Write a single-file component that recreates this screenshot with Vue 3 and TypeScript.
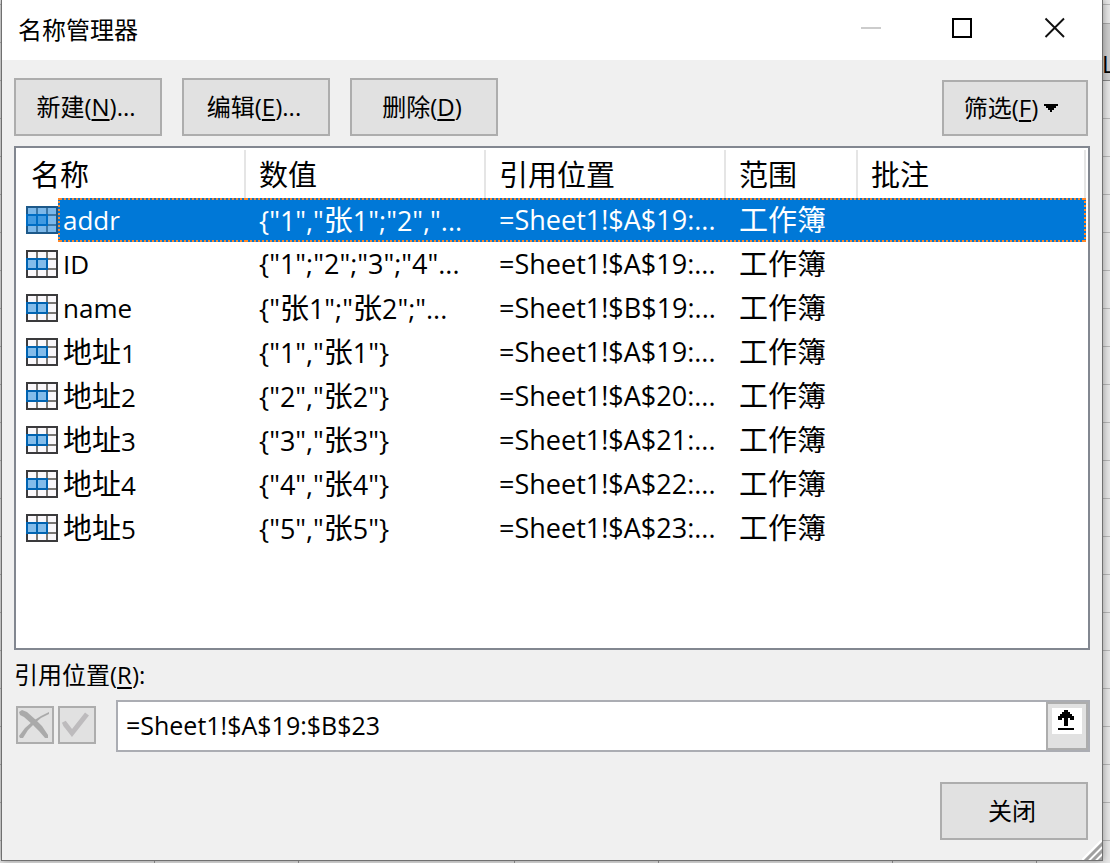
<script setup lang="ts">
import { ref } from 'vue'

interface NameEntry {
  name: string
  value: string
  refersTo: string
  scope: string
}

const entries: NameEntry[] = [
  { name: 'addr', value: '{"1","张1";"2","...', refersTo: '=Sheet1!$A$19:...', scope: '工作簿' },
  { name: 'ID', value: '{"1";"2";"3";"4"...', refersTo: '=Sheet1!$A$19:...', scope: '工作簿' },
  { name: 'name', value: '{"张1";"张2";"...', refersTo: '=Sheet1!$B$19:...', scope: '工作簿' },
  { name: '地址1', value: '{"1","张1"}', refersTo: '=Sheet1!$A$19:...', scope: '工作簿' },
  { name: '地址2', value: '{"2","张2"}', refersTo: '=Sheet1!$A$20:...', scope: '工作簿' },
  { name: '地址3', value: '{"3","张3"}', refersTo: '=Sheet1!$A$21:...', scope: '工作簿' },
  { name: '地址4', value: '{"4","张4"}', refersTo: '=Sheet1!$A$22:...', scope: '工作簿' },
  { name: '地址5', value: '{"5","张5"}', refersTo: '=Sheet1!$A$23:...', scope: '工作簿' },
]

const actions = [
  { text: '新建', key: 'N', tail: ')...' },
  { text: '编辑', key: 'E', tail: ')...' },
  { text: '删除', key: 'D', tail: ')' },
]

const selected = ref(0)
const reference = ref('=Sheet1!$A$19:$B$23')

// Han characters are set larger than Latin text in the list, so runs are split by script.
function runs(text: string): { text: string; han: boolean }[] {
  return (text.match(/[\u4e00-\u9fff]+|[^\u4e00-\u9fff]+/g) ?? []).map((t) => ({
    text: t,
    han: /[\u4e00-\u9fff]/.test(t),
  }))
}

function cells(e: NameEntry): string[] {
  return [e.name, e.value, e.refersTo, e.scope, '']
}
</script>

<template>
  <div class="sheet">
    <div class="column-head"><span>L</span></div>
    <main class="dialog">
      <header class="title-bar">
        <h1>名称管理器</h1>
        <div class="window-buttons">
          <button type="button" aria-label="最小化" disabled>
            <svg width="22" height="22" viewBox="0 0 22 22"><path d="M1 11h20" stroke="#ccc" stroke-width="2" /></svg>
          </button>
          <button type="button" aria-label="最大化">
            <svg width="22" height="22" viewBox="0 0 22 22"><path d="M1 2h18v18H1z" fill="none" stroke="#000" stroke-width="2" /></svg>
          </button>
          <button type="button" aria-label="关闭窗口">
            <svg width="22" height="22" viewBox="0 0 22 22"><path d="M1.500 1.500L20 20M20 1.500L1.500 20" stroke="#111" stroke-width="1.900" /></svg>
          </button>
        </div>
      </header>

      <div class="content">
        <div class="toolbar">
          <button v-for="a in actions" :key="a.key" type="button" class="btn">
            <span>{{ a.text }}(<u>{{ a.key }}</u>{{ a.tail }}</span>
          </button>
          <button type="button" class="btn filter">
            <span>筛选(<u>F</u>)</span>
            <svg width="14" height="8" viewBox="0 0 14 8"><path d="M0 0h14v2h-2v2h-2v2H8v2H6V6H4V4H2V2H0z" /></svg>
          </button>
        </div>

        <div class="list">
          <table>
            <colgroup>
              <col class="c-icon" /><col class="c-name" /><col class="c-wide" /><col class="c-wide" /><col class="c-scope" /><col />
            </colgroup>
            <thead>
              <tr>
                <th colspan="2" class="first">名称</th>
                <th>数值</th>
                <th>引用位置</th>
                <th>范围</th>
                <th>批注</th>
              </tr>
            </thead>
            <tbody>
              <tr v-for="(e, i) in entries" :key="e.name" :class="{ selected: i === selected }" @click="selected = i">
                <td class="icon">
                  <svg width="32" height="28" viewBox="0 0 32 28">
                    <rect x="1" y="1" width="30" height="26" fill="#faf8fb" stroke="#3a3a3c" stroke-width="2" />
                    <path d="M11 2v24M21 2v24M2 9h28M2 19h28" stroke="#797774" stroke-width="2" fill="none" />
                    <rect x="1" y="9" width="20" height="10" fill="#83bcea" stroke="#0063b1" stroke-width="2" />
                    <path d="M11 9v10" stroke="#0063b1" stroke-width="2" />
                    <rect v-if="i === selected" width="32" height="28" fill="#0078d7" fill-opacity=".5" />
                  </svg>
                </td>
                <td v-for="(c, j) in cells(e)" :key="j" :class="{ name: j === 0 }">
                  <span v-for="(r, k) in runs(c)" :key="k" :class="{ han: r.han }">{{ r.text }}</span>
                </td>
              </tr>
            </tbody>
          </table>
        </div>

        <label class="ref-label" for="refers-to">引用位置(<u>R</u>):</label>

        <div class="ref-row">
          <button type="button" class="mini" aria-label="取消" disabled>
            <svg width="34" height="34" viewBox="0 0 34 34" fill="#aaa">
              <path d="M1 4l3-2 5 2 9 8 6 6 6 9v3h-3l-6-7-6-6L6 9 2 7z" />
              <path d="M1 28l6-8 8-7 8-5 8-4v2l-8 4-6 5-7 7-5 8H2z" />
            </svg>
          </button>
          <button type="button" class="mini" aria-label="输入" disabled>
            <svg width="34" height="34" viewBox="0 0 34 34">
              <path d="M3 17l2-1 7 9L27 6" fill="none" stroke="#bdbbbd" stroke-width="5" />
            </svg>
          </button>
          <div class="ref-box">
            <input id="refers-to" v-model="reference" type="text" spellcheck="false" />
            <button type="button" class="collapse" aria-label="折叠对话框">
              <svg width="30" height="26" viewBox="0 0 30 26">
                <path d="M0 0h30v26H0z" fill="#fff" />
                <path d="M12 2h4v2h2v2h2v2h2v4h-4v-2h-2v8h-4v-8h-2v2H6V8h2V6h2V4h2zM6 20h16v2H6z" />
              </svg>
            </button>
          </div>
        </div>

        <footer>
          <button type="button" class="btn">关闭</button>
        </footer>
      </div>

      <svg class="grip" width="20" height="20" viewBox="0 0 20 20">
        <path d="M0 20L20 0M7 20L20 7M14 20l6-6" stroke="#fff" stroke-width="2" />
        <path d="M3 21L21 3M10 21l11-11M17 21l4-4" stroke="#a0a0a0" stroke-width="3" />
      </svg>
    </main>
  </div>
</template>

<style>
body {
  margin: 0;
}
</style>

<style scoped>
* {
  box-sizing: border-box;
}

.sheet {
  position: relative;
  display: flex;
  min-height: 100vh;
  padding: 0 7px 2px 1px;
  overflow: hidden;
  font-family: "Open Sans", "Noto Sans CJK SC", sans-serif;
  font-size: 24px;
  line-height: 32px;
  color: #000;
  background:
    linear-gradient(#999, #999) 154px 100% / 1px 4px no-repeat,
    linear-gradient(#999, #999) 298px 100% / 1px 4px no-repeat,
    linear-gradient(#999, #999) 514px 100% / 1px 4px no-repeat,
    linear-gradient(#999, #999) 658px 100% / 1px 4px no-repeat,
    linear-gradient(#999, #999) 892px 100% / 1px 4px no-repeat,
    linear-gradient(#999, #999) 1036px 100% / 1px 4px no-repeat,
    repeating-linear-gradient(#e8e8e8 0 4px, #b8b8b8 4px 5px, #e8e8e8 5px 38px);
}

.column-head {
  position: absolute;
  top: 23px;
  right: 0;
  width: 8px;
  height: 58px;
  border-top: 1px solid #aaa;
  border-bottom: 1px solid #888;
  background: #cfcfcf;
  line-height: 80px;
  overflow: hidden;
}

.dialog {
  position: relative;
  flex: 1;
  min-width: 0;
  display: flex;
  flex-direction: column;
  border: 1px solid #707070;
  border-top: 0;
  background: #f0f0f0;
  box-shadow: 0 0 8px rgba(0, 0, 0, 0.4);
}

.title-bar {
  display: flex;
  align-items: center;
  justify-content: space-between;
  height: 60px;
  padding: 0 36px 4px 16px;
  background: #fff;
}

h1 {
  margin: 4px 0 0;
  font-size: 24px;
  font-weight: 400;
}

.window-buttons {
  display: flex;
  gap: 70px;
}

.window-buttons button {
  display: flex;
  padding: 0;
  border: 0;
  background: none;
}

.content {
  flex: 1;
  display: flex;
  flex-direction: column;
  padding: 18px 12px 20px;
}

.toolbar {
  display: flex;
  align-items: flex-end;
  gap: 20px;
  padding-right: 2px;
}

.btn {
  width: 148px;
  height: 58px;
  padding: 0 4px 0 0;
  border: 2px solid #adadad;
  background: #e1e1e1;
  color: #000;
  font: inherit;
}

u {
  text-underline-offset: 3px;
  text-decoration-thickness: 2px;
}

.filter {
  display: flex;
  align-items: center;
  justify-content: center;
  gap: 6px;
  width: 146px;
  height: 56px;
  margin-left: auto;
  padding-right: 8px;
}

.list {
  flex: 1;
  margin-top: 10px;
  padding: 2px 2px 0 0;
  border: 2px solid #828790;
  background: #fff;
}

table {
  width: 100%;
  table-layout: fixed;
  border-collapse: separate;
  border-spacing: 0;
}

.c-icon {
  width: 42px;
}

.c-name {
  width: 188px;
}

.c-wide {
  width: 240px;
}

.c-scope {
  width: 132px;
}

th {
  height: 48px;
  padding: 2px 0 0 13px;
  border-right: 2px solid #e5e5e5;
  font-size: 29px;
  font-weight: 400;
  text-align: left;
}

th.first {
  padding-left: 15px;
}

td {
  height: 44px;
  padding: 0 0 0 13px;
  font-size: 27px;
  white-space: nowrap;
  line-height: 40px;
}

td.icon {
  padding: 0 0 0 10px;
}

td.icon svg {
  display: block;
}

td.name {
  padding-left: 5px;
  font-size: 26px;
}

td .han {
  font-size: 29px;
}

.selected td:not(.icon) {
  color: #fff;
  background:
    repeating-linear-gradient(90deg, #ff8728 0 2px, #0078d7 2px 4px) 0 0 / 100% 2px no-repeat,
    repeating-linear-gradient(90deg, #ff8728 0 2px, #0078d7 2px 4px) 0 100% / 100% 2px no-repeat,
    #0078d7;
}

.selected td.name {
  border-left: 2px dotted #ff8728;
  padding-left: 3px;
}

.selected td:last-child {
  border-right: 2px dotted #ff8728;
}

.ref-label {
  margin: 9px 0 9px;
}

.ref-row {
  display: flex;
  align-items: flex-start;
  gap: 4px;
  padding-left: 2px;
}

.mini {
  width: 38px;
  height: 38px;
  margin-top: 6px;
  padding: 0;
  border: 2px solid #adadad;
  background: #e1e1e1;
}

.mini svg,
.collapse svg {
  display: block;
}

.ref-box {
  flex: 1;
  display: flex;
  height: 52px;
  margin-left: 16px;
  border: 2px solid #abadb3;
  background: #fff;
}

input {
  flex: 1;
  min-width: 0;
  padding: 0 8px 2px;
  border: 0;
  outline: 0;
  background: transparent;
  color: #000;
  font: inherit;
  font-size: 25px;
}

.collapse {
  display: flex;
  width: 42px;
  padding: 4px 0 0 4px;
  border: 2px solid #adadad;
  background: #e1e1e1;
}

footer {
  display: flex;
  justify-content: flex-end;
  margin-top: 30px;
  padding-right: 2px;
}

.grip {
  position: absolute;
  right: 0;
  bottom: 0;
}
</style>
